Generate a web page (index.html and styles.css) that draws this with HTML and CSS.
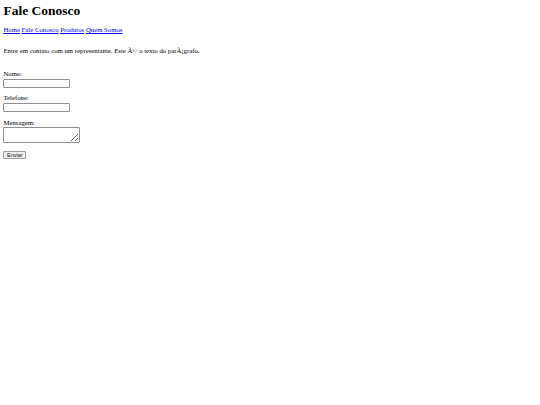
FILE: index.html
```html
<!DOCTYPE html>
<html lang="pt">
<head>
<meta charset="utf-8">
<title>Fale Conosco</title>
<link rel="stylesheet" href="styles.css">
</head>
<body>
<h1 class="title">Fale Conosco</h1>
<nav class="menu">
<a href="#">Home</a>
<a href="#">Fale Conosco</a>
<a href="#">Produtos</a>
<a href="#">Quem Somos</a>
</nav>
<p class="intro">Entre em contato com um representante. Este Ã© o texto do parÃ¡grafo.</p>
<form class="form">
<div class="field"><label class="label">Nome:</label><input class="input" type="text"></div>
<div class="field"><label class="label">Telefone:</label><input class="input" type="text"></div>
<div class="field"><label class="label">Mensagem:</label><textarea class="textarea"></textarea></div>
<div class="field field-submit"><button class="button" type="button">Enviar</button></div>
</form>
</body>
</html>
```
FILE: styles.css
```css
html, body {
  background: #fff;
}
body {
  margin: 3px 3.4px 0;
  font-family: "Liberation Serif", "Times New Roman", serif;
  font-size: 6.75px;
  color: #000;
}
.title {
  font-size: 13.5px;
  font-weight: bold;
  margin: 0 0 7.4px;
  line-height: 16px;
}
.menu {
  line-height: 8px;
}
.menu a {
  color: #0000ee;
  text-decoration: underline;
}
.intro {
  margin: 12.6px 0 15.4px;
  line-height: 8px;
}
.form {
  display: flex;
  flex-direction: column;
  gap: 6.5px;
}
.field {
  display: flex;
  flex-direction: column;
  align-items: flex-start;
}
.field-submit {
  padding-top: 1.5px;
}
.label {
  line-height: 8.6px;
}
.input {
  box-sizing: border-box;
  width: 67px;
  height: 9px;
  margin: 0;
  padding: 0;
  border: 1px solid #8f8f8f;
  border-radius: 1px;
  font-size: 5.6px;
  background: #fff;
}
.textarea {
  box-sizing: border-box;
  width: 77px;
  height: 16px;
  margin: 0;
  padding: 0;
  border: 1px solid #8f8f8f;
  border-radius: 1px;
  font-size: 5.6px;
  resize: both;
}
.button {
  box-sizing: border-box;
  width: 23px;
  height: 8px;
  margin: 0;
  padding: 0;
  font-family: "Liberation Sans", Arial, sans-serif;
  font-size: 5.6px;
  line-height: 6px;
  color: #222;
  background: #efefef;
  border: 1px solid #9a9a9a;
  border-radius: 1px;
}
```
